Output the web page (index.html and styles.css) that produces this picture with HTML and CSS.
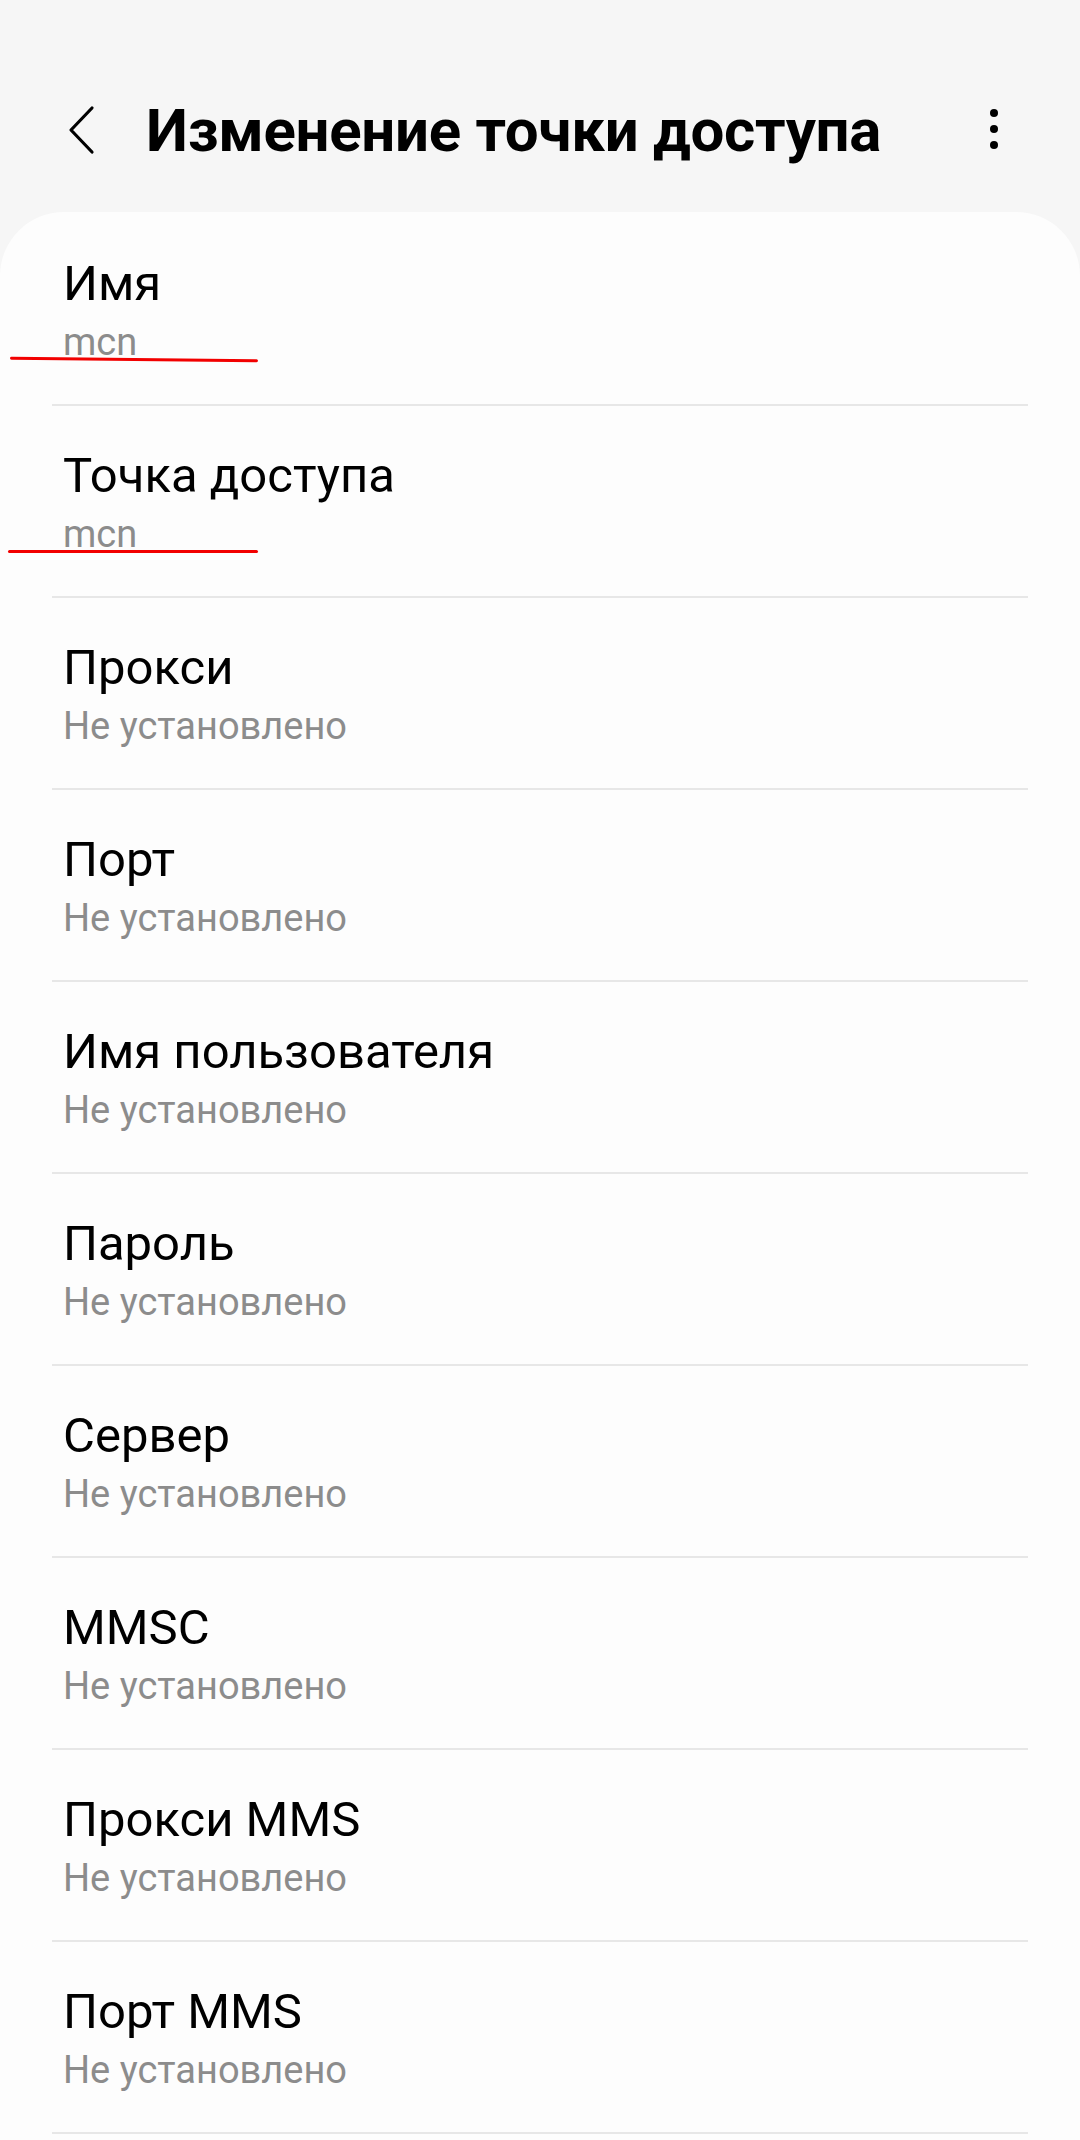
FILE: index.html
```html
<!DOCTYPE html>
<html>

<head>
  <title>Изменение точки доступа</title>
  <meta name="viewport" content="width=device-width, initial-scale=1">

  <link rel="stylesheet" href="styles.css">
</head>

<body>
  <div id="app-bar">
    <div class="back-btn">
      <svg width="30" height="50" viewBox="0 0 30 50">
        <path d="M26 3 L5 25 L26 47" fill="none" stroke="#000" stroke-width="3.2" stroke-linecap="round" stroke-linejoin="round" />
      </svg>
    </div>
    <h1>Изменение точки доступа</h1>
    <div class="more-btn">
      <span class="dot"></span>
      <span class="dot"></span>
      <span class="dot"></span>
    </div>
  </div>

  <div id="settings-card">
    <div class="setting-row">
      <div class="setting-title">Имя</div>
      <div class="setting-value">mcn</div>
      <div class="mark mark-one"></div>
    </div>
    <div class="setting-row">
      <div class="setting-title">Точка доступа</div>
      <div class="setting-value">mcn</div>
      <div class="mark mark-two"></div>
    </div>
    <div class="setting-row">
      <div class="setting-title">Прокси</div>
      <div class="setting-value">Не установлено</div>
    </div>
    <div class="setting-row">
      <div class="setting-title">Порт</div>
      <div class="setting-value">Не установлено</div>
    </div>
    <div class="setting-row">
      <div class="setting-title">Имя пользователя</div>
      <div class="setting-value">Не установлено</div>
    </div>
    <div class="setting-row">
      <div class="setting-title">Пароль</div>
      <div class="setting-value">Не установлено</div>
    </div>
    <div class="setting-row">
      <div class="setting-title">Сервер</div>
      <div class="setting-value">Не установлено</div>
    </div>
    <div class="setting-row">
      <div class="setting-title">MMSC</div>
      <div class="setting-value">Не установлено</div>
    </div>
    <div class="setting-row">
      <div class="setting-title">Прокси MMS</div>
      <div class="setting-value">Не установлено</div>
    </div>
    <div class="setting-row">
      <div class="setting-title">Порт MMS</div>
      <div class="setting-value">Не установлено</div>
    </div>
  </div>
</body>

</html>
```

FILE: styles.css
```css
body {
  font-family: Roboto, "Noto Sans", sans-serif;
  background-color: #f6f6f6;
  color: #000;
  margin: 0;
  padding: 0;
  width: 1080px;
  height: 2140px;
  overflow: hidden;
}

/* BARRA SUPERIOR */
#app-bar {
  display: flex;
  align-items: center;
  box-sizing: border-box;
  height: 212px;
  padding-top: 49px;
  padding-left: 66px;
  padding-right: 78px;
}

.back-btn {
  display: flex;
  width: 30px;
  height: 50px;
  margin-bottom: 2px;
}

#app-bar h1 {
  margin: 0 0 0 50px;
  font-size: 60px;
  line-height: 68px;
  font-weight: 700;
  flex-grow: 1;
  letter-spacing: -0.3px;
}

.more-btn {
  display: flex;
  flex-direction: column;
  align-items: center;
  gap: 8px;
  width: 16px;
  margin-bottom: 3px;
}

.dot {
  width: 8px;
  height: 8px;
  border-radius: 50%;
  background-color: #000;
}

/* LISTA */
#settings-card {
  background-color: #fdfdfd;
  border-radius: 64px 64px 0 0;
  padding-top: 2px;
  min-height: 1926px;
}

.setting-row {
  position: relative;
  margin: 0 52px;
  padding: 42px 0 0 11px;
  box-sizing: border-box;
  border-bottom: 2px solid #e7e7e7;
  height: 192px;
}

.setting-title {
  font-size: 49px;
  line-height: 56px;
}

.setting-value {
  margin-top: 8px;
  font-size: 38px;
  line-height: 44px;
  color: #8c8c8c;
}

/* marcas vermelhas por cima */
.mark {
  position: absolute;
  height: 3px;
  background-color: #f20000;
  border-radius: 2px;
}

.mark-one {
  left: -42px;
  top: 144px;
  width: 248px;
  transform: rotate(0.6deg);
}

.mark-two {
  left: -44px;
  top: 144px;
  width: 250px;
}
```
